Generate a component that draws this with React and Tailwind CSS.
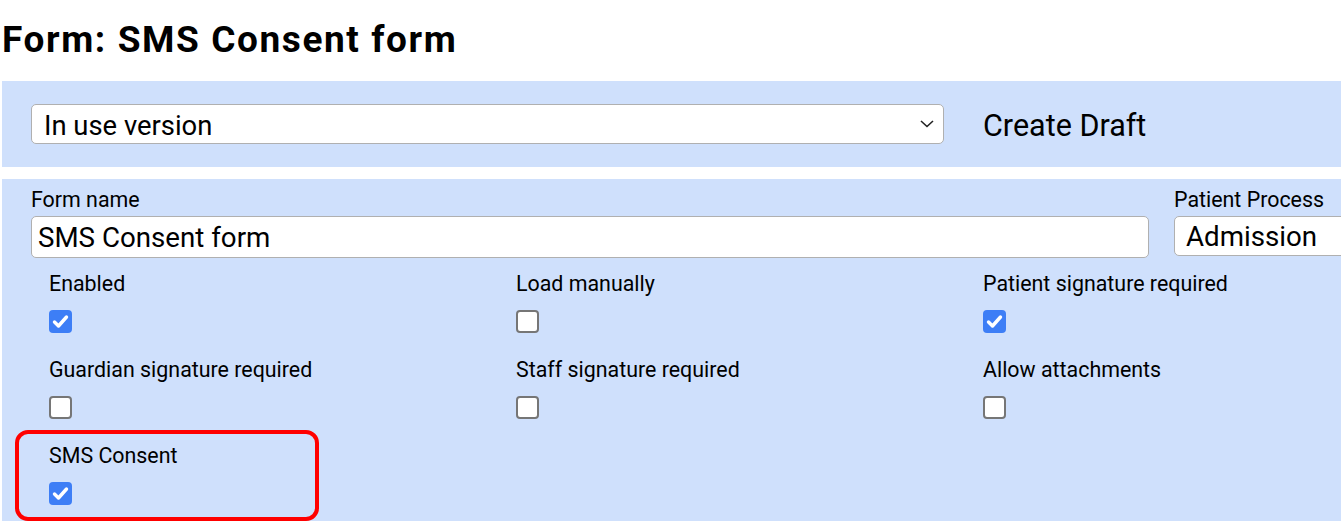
import React from "react";

function Box({ checked }) {
  if (checked) {
    return (
      <div className="w-[23px] h-[23px] rounded-[4px] bg-[#3d7ef6] flex items-center justify-center">
        <svg width="23" height="23" viewBox="0 0 23 23">
          <path d="M5.5 12 L9.5 16 L17.5 7" fill="none" stroke="#fff" strokeWidth="3.4" strokeLinecap="round" strokeLinejoin="round" />
        </svg>
      </div>
    );
  }
  return <div className="w-[23px] h-[23px] rounded-[4px] bg-white border-2 border-[#767676]" />;
}

function Cell({ label, checked }) {
  return (
    <div className="flex flex-col">
      <div className="text-[21.4px] leading-[25px] h-[25px] whitespace-nowrap mt-[2px]">{label}</div>
      <div className="mt-[14px]">
        <Box checked={checked} />
      </div>
    </div>
  );
}

export default function App() {
  return (
    <div
      className="w-[1341px] h-[521px] overflow-hidden bg-white text-black relative"
      style={{ fontFamily: "Roboto, 'Liberation Sans', sans-serif" }}
    >
      <h1 className="text-[37px] tracking-[1.6px] font-bold leading-[42px] pt-[19px] pl-[2px] mb-[20px] whitespace-nowrap">
        Form: SMS Consent form
      </h1>

      <div className="ml-[2px] w-[1500px] h-[86px] bg-[#cfe0fc] flex items-center pl-[29px]">
        <div className="shrink-0 w-[913px] h-[40px] bg-white border border-[#b0b0b0] rounded-[5px] flex items-center justify-between pl-[12px] pr-[9px]">
          <span className="text-[27.4px] leading-none pt-[6px]">In use version</span>
          <svg width="14" height="8" viewBox="0 0 14 8">
            <path d="M1 1 L7 6.5 L13 1" fill="none" stroke="#222" strokeWidth="1.6" />
          </svg>
        </div>
        <div className="ml-[39px] text-[30.5px] leading-none pt-[4px] whitespace-nowrap">Create Draft</div>
      </div>

      <div className="ml-[2px] mt-[12px] w-[1500px] h-[400px] bg-[#cfe0fc] pt-[8px]">
        <div className="flex pl-[29px] gap-[25px]">
          <div className="shrink-0 flex flex-col w-[1118px]">
            <div className="text-[21.4px] leading-[25px]">Form name</div>
            <div className="mt-[3.5px] h-[42px] bg-white border border-[#b0b0b0] rounded-[5px] flex items-center pl-[6px]">
              <span className="text-[27.7px] leading-none pt-[2px]">SMS Consent form</span>
            </div>
          </div>
          <div className="shrink-0 flex flex-col w-[260px]">
            <div className="text-[21.4px] leading-[25px]">Patient Process</div>
            <div className="mt-[3.5px] h-[40px] bg-white border border-[#b0b0b0] rounded-[5px] flex items-center pl-[11px]">
              <span className="text-[27.7px] leading-none pt-[2px]">Admission</span>
            </div>
          </div>
        </div>

        <div className="grid grid-cols-[467px_467px_467px] gap-y-[22px] pl-[47px] mt-[11px]">
          <Cell label="Enabled" checked />
          <Cell label="Load manually" />
          <Cell label="Patient signature required" checked />
          <Cell label="Guardian signature required" />
          <Cell label="Staff signature required" />
          <Cell label="Allow attachments" />
          <Cell label="SMS Consent" checked />
        </div>
      </div>

      <div className="absolute left-[15px] top-[430px] w-[304px] h-[91px] border-[4px] border-[#ff0000] rounded-[13px]" />
    </div>
  );
}
